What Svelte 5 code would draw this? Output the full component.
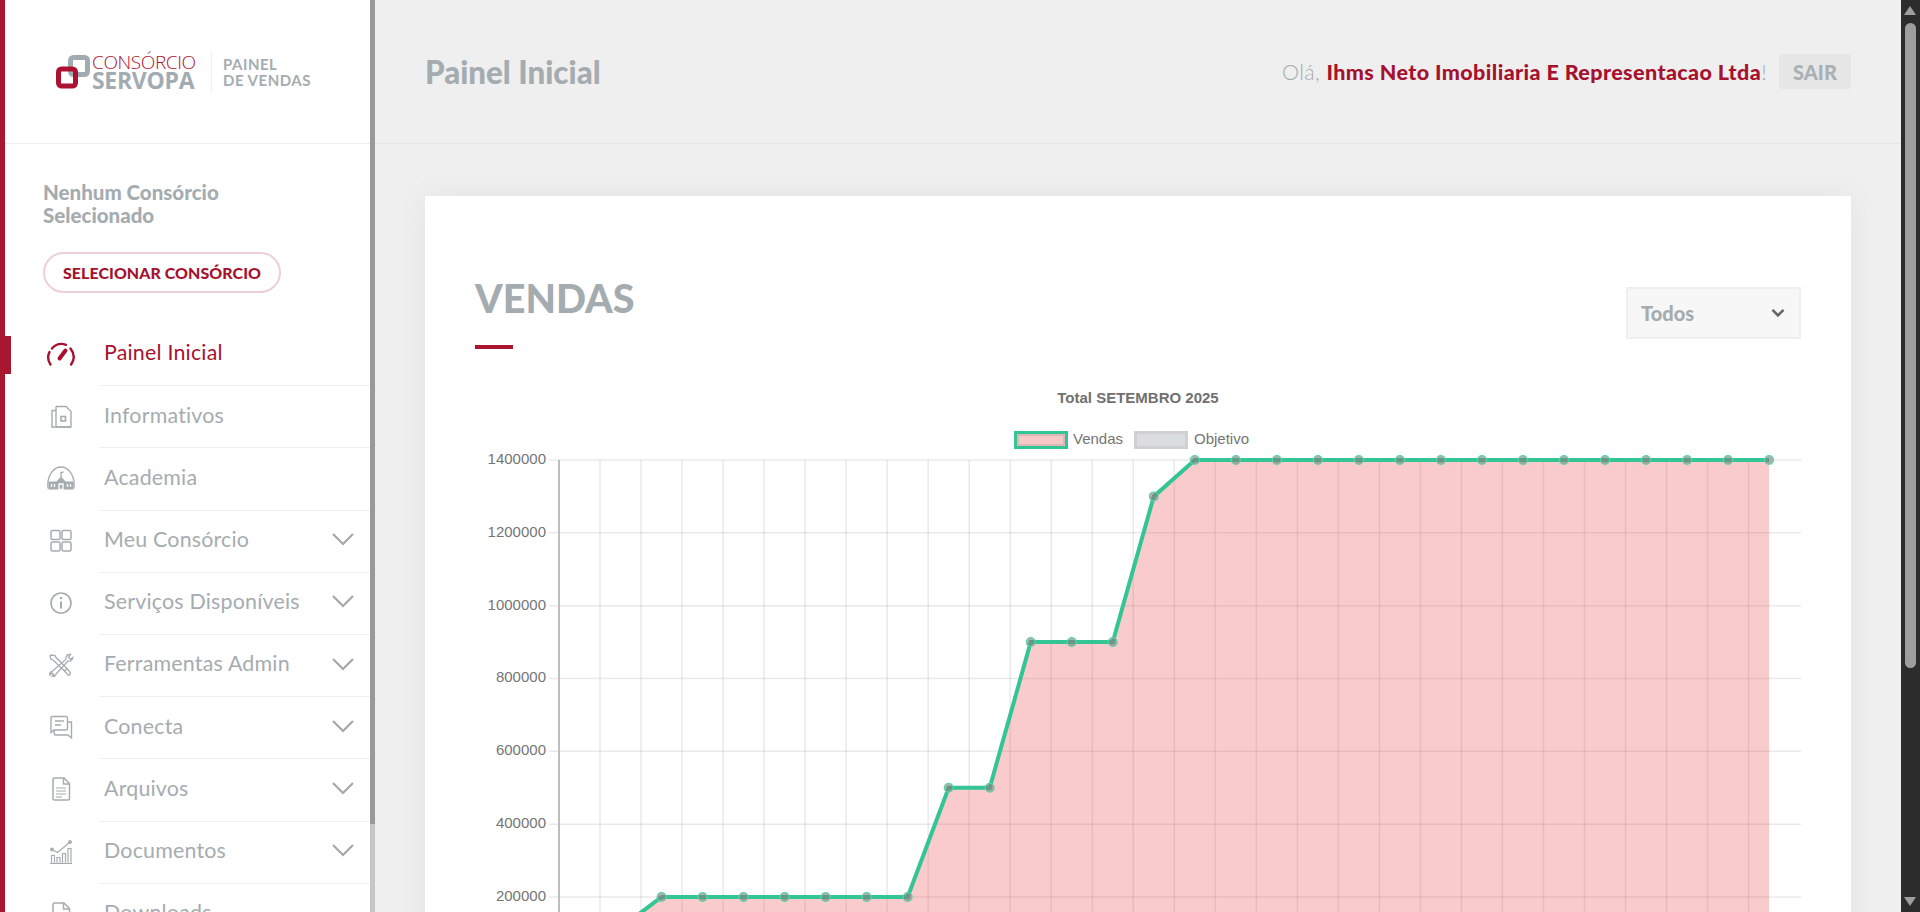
<script>
  const menu = [
    { label: 'Painel Inicial', icon: 'gauge', active: true },
    { label: 'Informativos', icon: 'note' },
    { label: 'Academia', icon: 'school' },
    { label: 'Meu Consórcio', icon: 'grid', sub: true },
    { label: 'Serviços Disponíveis', icon: 'info', sub: true },
    { label: 'Ferramentas Admin', icon: 'tools', sub: true },
    { label: 'Conecta', icon: 'chat', sub: true },
    { label: 'Arquivos', icon: 'doc', sub: true },
    { label: 'Documentos', icon: 'bars', sub: true },
    { label: 'Downloads', icon: 'doc' }
  ];

  const x0 = 559, step = 41.02;
  const yOf = (v) => 969.8 - (v / 200000) * 72.83;
  const ticks = [1400000, 1200000, 1000000, 800000, 600000, 400000, 200000];
  const values = [0, 115000, 200000, 200000, 200000, 200000, 200000, 200000, 200000, 500000, 500000, 900000, 900000, 900000, 1300000,
    ...Array(15).fill(1400000)];
  const pts = values.map((v, i) => ({ x: x0 + (i + 0.5) * step, y: yOf(v) }));
  const line = pts.map((p) => `${p.x},${p.y}`).join(' ');
  const area = `${pts[0].x},969.8 ${line} ${pts[pts.length - 1].x},969.8`;
  const verticals = Array.from({ length: 29 }, (_, i) => x0 + (i + 1) * step);
</script>

{#snippet icon(name)}
  {#if name === 'gauge'}
    <svg class="ic" viewBox="0 0 30 24" fill="none" stroke="currentColor" stroke-width="2.400" stroke-linecap="round">
      <path d="M4.500 22.500C1.800 18.500 1.500 14 3.500 10" />
      <path d="M6 6.500C9.500 2.500 15 1 20 2.800" />
      <path d="M24.500 6.500c3.700 4.700 4.300 10.800.6 16" />
      <path d="M19.500 8.500 13.500 16.500" stroke-width="4" />
    </svg>
  {:else if name === 'note'}
    <svg class="ic" viewBox="0 0 30 24" fill="none" stroke="currentColor" stroke-width="1.400">
      <path d="M10 2.500h10l5 5v15.500h-15" />
      <path d="M10 6.500H6v16.500h19" />
      <path d="M10 2.500v20" />
      <rect x="15" y="12.500" width="4.500" height="4.500" stroke-width="1.600" />
    </svg>
  {:else if name === 'school'}
    <svg class="ic" viewBox="0 0 30 24" fill="none" stroke="currentColor" stroke-width="1.300">
      <path d="M2 22.500C.6 9 8 1 15 1s14.400 8 13 21.500" />
      <path d="M2.500 23.500v-8h8l4.500-5 4.500 5h8v8z" fill="currentColor" stroke="none" />
      <path d="M15 11V6.500l2.500-.5" />
      <path d="M5.500 18v3M8.500 18v3M21.500 18v3M24.500 18v3M13 18h4v5.500h-4z" stroke="#fff" />
    </svg>
  {:else if name === 'grid'}
    <svg class="ic" viewBox="0 0 30 24" fill="none" stroke="currentColor" stroke-width="1.500">
      <rect x="5" y="1.500" width="9" height="9" rx="1.500" />
      <rect x="16" y="1.500" width="9" height="9" rx="1.500" />
      <rect x="5" y="13" width="9" height="9" rx="1.500" />
      <rect x="16" y="13" width="9" height="9" rx="1.500" />
    </svg>
  {:else if name === 'info'}
    <svg class="ic" viewBox="0 0 30 24" fill="none" stroke="currentColor" stroke-width="1.600">
      <circle cx="15" cy="12" r="10" />
      <path d="M15 10.500V17.500" stroke-width="2" />
      <circle cx="15" cy="7" r="1.200" fill="currentColor" stroke="none" />
    </svg>
  {:else if name === 'tools'}
    <svg class="ic" viewBox="0 0 30 24" fill="none" stroke="currentColor" stroke-width="1.300">
      <path d="M5 2 4 3l1 3 2 1 11.500 11 2.500-2.500L10 4.500 9 2.500z" />
      <path d="m18.500 18 3.500 4c1 .9 3.200-1.300 2.300-2.300L21 15.500" />
      <path d="M24.500 1.500c-2.500-.5-4.500 1-4.500 3.500l-.2 1.500L6 18.500c-2 .5-2.500 2-2 3.500l2-1.800 1.800 1.500-1.500 1.800c1.800.3 3.400-.5 3.700-2.500L22 8c2.500.5 4.500-.8 4.800-3.500l-2.300 1.700-2-1.700z" />
    </svg>
  {:else if name === 'chat'}
    <svg class="ic" viewBox="0 0 30 24" fill="none" stroke="currentColor" stroke-width="1.400">
      <path d="M6 1.500h14c1 0 1.500.6 1.500 1.500v10.500c0 1-.6 1.500-1.500 1.500H8l-3 2.500V3c0-1 .2-1.500 1-1.500z" />
      <path d="M21.500 7H25.500v16l-3.500-3H9.500c-.8 0-1.300-.5-1.300-1.500V15" />
      <path d="M9 6h9M9 10h6" />
    </svg>
  {:else if name === 'doc'}
    <svg class="ic" viewBox="0 0 30 24" fill="none" stroke="currentColor" stroke-width="1.500">
      <path d="M8.500 1h9.500l5.500 5.500V21.500c0 1-.5 1.500-1.500 1.500H8.500c-1 0-1.500-.5-1.500-1.500V2.500C7 1.500 7.500 1 8.500 1z" />
      <path d="M17.500 1v6h6" />
      <path d="M10 11h10M10 14h10M10 17h10M10 20h6" stroke-width="1.100" />
    </svg>
  {:else if name === 'bars'}
    <svg class="ic" viewBox="0 0 30 24" fill="none" stroke="currentColor" stroke-width="1.200">
      <path d="M4 23.500h22" stroke-width="1.400" />
      <path d="M5.500 22.500v-7h3v7M11 22.500v-5h3v5M16.500 22.500v-9h3v9M22 22.500v-14h3v14" />
      <path d="M6 9.500l5.500 3 6-5L24 2" />
      <circle cx="24" cy="2" r="1.300" fill="currentColor" />
      <circle cx="6" cy="9.500" r="1.300" fill="currentColor" />
    </svg>
  {/if}
{/snippet}

<div class="app">
  <aside class="sidebar">
    <div class="brand">
      <svg class="mark" viewBox="0 0 34 34" fill="none" stroke-width="5">
        <rect x="14.500" y="2.500" width="17" height="17" rx="3" stroke="#a2abb2" />
        <rect x="2.500" y="14" width="17" height="17" rx="3" stroke="#ab1231" />
      </svg>
      <div class="wordmark">
        <span class="w1">CONSÓRCIO</span>
        <span class="w2">SERVOPA</span>
      </div>
      <div class="tag">
        <span>PAINEL</span>
        <span>DE VENDAS</span>
      </div>
    </div>

    <div class="selection">
      <p>Nenhum Consórcio<br />Selecionado</p>
      <button class="pick">SELECIONAR CONSÓRCIO</button>
    </div>

    <nav>
      {#each menu as m}
        <div class="row" class:active={m.active}>
          <span class="glyph">{@render icon(m.icon)}</span>
          <span class="text">
            <span class="label">{m.label}</span>
            {#if m.sub}
              <svg class="chev" viewBox="0 0 24 14" fill="none" stroke="currentColor" stroke-width="2.200"><path d="M2 2l10 10L22 2" /></svg>
            {/if}
          </span>
        </div>
      {/each}
    </nav>

    <div class="side-track"><div class="side-thumb"></div></div>
  </aside>

  <main class="main">
    <header class="top">
      <h1>Painel Inicial</h1>
      <div class="user">
        <span class="hello">Olá, <b>Ihms Neto Imobiliaria E Representacao Ltda</b>!</span>
        <button class="exit">SAIR</button>
      </div>
    </header>

    <section class="content">
      <div class="card">
        <div class="card-head">
          <div>
            <h2>VENDAS</h2>
            <div class="rule"></div>
          </div>
          <div class="select">
            <span>Todos</span>
            <svg viewBox="0 0 14 10" fill="none" stroke="#666" stroke-width="2.600"><path d="M1.500 1.800 7 7.500l5.500-5.700" /></svg>
          </div>
        </div>

        <svg class="chart" viewBox="475 380 1326 600">
          <text class="title" x="1138" y="403" text-anchor="middle">Total SETEMBRO 2025</text>

          <rect x="1015.500" y="432.500" width="51" height="15" fill="#f9c8c9" stroke="#33c594" stroke-width="3" />
          <rect x="1018" y="435" width="46" height="10" fill="none" stroke="#8a9a8f" stroke-width="1" opacity=".6" />
          <text class="tick" x="1073" y="444">Vendas</text>
          <rect x="1135.500" y="432.500" width="51" height="15" fill="#dcdde0" stroke="#d0d0d0" stroke-width="3" />
          <text class="tick" x="1194" y="444">Objetivo</text>

          {#each ticks as t}
            <line class="grid" x1="549" x2="1801" y1={yOf(t)} y2={yOf(t)} />
            <text class="tick" x="546" y={yOf(t) + 4} text-anchor="end">{t}</text>
          {/each}
          {#each verticals as x}
            <line class="grid" x1={x} x2={x} y1="460" y2="980" />
          {/each}
          <line x1="559" x2="559" y1="460" y2="980" stroke="#bdbdbd" stroke-width="2" />

          <polygon points={area} fill="rgba(235,70,72,.28)" />
          <polyline points={line} fill="none" stroke="#33c594" stroke-width="4" />
          {#each pts.slice(1) as p}
            <circle cx={p.x} cy={p.y} r="4.400" fill="rgba(128,128,128,.62)" stroke="#5cd3aa" stroke-width="1.200" />
          {/each}
        </svg>
      </div>
    </section>
  </main>

  <div class="page-bar">
    <span class="arrow up"></span>
    <div class="page-thumb"></div>
    <span class="arrow down"></span>
  </div>
</div>

<style>
  :global(body) {
    margin: 0;
    overflow: hidden;
    background: #efefef;
  }
  .app {
    display: flex;
    height: 912px;
    overflow: hidden;
    font-family: Lato, "Open Sans", sans-serif;
    color: #a5acb0;
  }

  .sidebar {
    position: relative;
    flex: 0 0 370px;
    box-sizing: border-box;
    border-left: 5px solid #a8162f;
    background: #fff;
    margin-right: 5px;
  }
  .side-track {
    position: absolute;
    top: 0;
    bottom: 0;
    right: -5px;
    width: 5px;
    background: #c6c6c6;
  }
  .side-thumb {
    height: 824px;
    background: #999;
  }

  .brand {
    display: flex;
    align-items: center;
    height: 143px;
    border-bottom: 1px solid #eee;
    padding-left: 51px;
  }
  .mark {
    width: 34px;
    height: 34px;
    margin-right: 2px;
  }
  .wordmark {
    display: flex;
    flex-direction: column;
    width: 119px;
    font-family: "Open Sans", sans-serif;
  }
  .w1 {
    color: #ab1231;
    font-size: 19px;
    line-height: 17px;
    font-weight: 300;
    letter-spacing: -0.400px;
  }
  .w2 {
    color: #a2abb2;
    font-size: 23px;
    line-height: 18px;
    font-weight: 700;
    letter-spacing: -0.300px;
  }
  .tag {
    display: flex;
    flex-direction: column;
    border-left: 1px solid #eee;
    padding: 4px 0 4px 11px;
    font-size: 15px;
    line-height: 16px;
    font-weight: 700;
    letter-spacing: 0.500px;
  }

  .selection {
    padding: 37px 0 0 38px;
  }
  .selection p {
    margin: 0;
    font-size: 20.500px;
    line-height: 23px;
    font-weight: 900;
  }
  .pick {
    display: block;
    box-sizing: border-box;
    width: 238px;
    height: 41px;
    margin-top: 25px;
    padding: 0;
    background: #fff;
    border: 2px solid #edd0d5;
    border-radius: 21px;
    color: #a6122e;
    font: 900 15.900px Lato, sans-serif;
    letter-spacing: 0.100px;
  }

  nav {
    padding-top: 31px;
  }
  .row {
    position: relative;
    display: flex;
    height: 62.200px;
    font-size: 21.400px;
    letter-spacing: 0.200px;
  }
  .row.active {
    color: #a6122e;
  }
  .row.active::before {
    content: '';
    position: absolute;
    left: -5px;
    top: 12px;
    width: 11px;
    height: 38px;
    background: #a8162f;
  }
  .glyph {
    flex: 0 0 94px;
    display: flex;
    align-items: center;
    padding: 0 0 2px 41px;
    box-sizing: border-box;
  }
  .ic {
    width: 30px;
    height: 24px;
  }
  .text {
    flex: 1;
    display: flex;
    align-items: center;
    justify-content: space-between;
    padding: 0 15px 4px 5px;
    border-bottom: 1px solid #eee;
    box-sizing: border-box;
    line-height: 1;
  }
  .label {
    padding-top: 1px;
  }
  .chev {
    width: 24px;
    height: 14px;
    color: #a7a7a7;
  }

  .main {
    flex: 1;
    min-width: 0;
  }
  .top {
    display: flex;
    align-items: center;
    justify-content: space-between;
    height: 143px;
    padding: 0 50px;
    border-bottom: 1px solid #e6e6e6;
  }
  .top h1 {
    margin: 0;
    font-size: 31.300px;
    font-weight: 900;
    color: #a5acb0;
  }
  .user {
    display: flex;
    align-items: center;
    gap: 12px;
  }
  .hello {
    font-size: 21.500px;
    font-weight: 300;
    letter-spacing: 0.400px;
    color: #a5acb0;
  }
  .hello b {
    color: #a6122e;
    font-weight: 900;
  }
  .exit {
    width: 72px;
    height: 35px;
    padding: 0;
    border: 0;
    border-radius: 4px;
    background: #e6e6e6;
    color: #a9b0b3;
    font: 900 20px Lato, sans-serif;
  }

  .content {
    padding: 52px 50px 0;
  }
  .card {
    background: #fff;
    padding: 79px 50px 0;
    box-shadow: 0 0 30px rgba(0, 0, 0, 0.05);
  }
  .card-head {
    display: flex;
    align-items: flex-start;
    justify-content: space-between;
    height: 105px;
  }
  h2 {
    margin: 0;
    font-size: 39.500px;
    line-height: 46px;
    font-weight: 900;
    color: #a5acb0;
  }
  .rule {
    width: 38px;
    height: 4px;
    margin-top: 24px;
    background: #a8162f;
  }
  .select {
    display: flex;
    align-items: center;
    justify-content: space-between;
    box-sizing: border-box;
    width: 175px;
    height: 52px;
    margin-top: 12px;
    padding: 0 14px 0 13px;
    background: #f7f7f7;
    border: 2px solid #efefef;
    font-size: 20px;
    font-weight: 900;
  }
  .select svg {
    width: 14px;
    height: 10px;
  }
  .chart {
    display: block;
    width: 1326px;
    height: 600px;
  }
  .title {
    font: 700 15px "Liberation Sans", Arial, sans-serif;
    fill: #707070;
  }
  .tick {
    font: 15px "Liberation Sans", Arial, sans-serif;
    fill: #757575;
  }
  .grid {
    stroke: rgba(0, 0, 0, 0.085);
    stroke-width: 1.500;
  }

  .page-bar {
    position: relative;
    flex: 0 0 19px;
    background: #2c2c2c;
  }
  .page-thumb {
    position: absolute;
    top: 23px;
    left: 4px;
    width: 11px;
    height: 645px;
    border-radius: 6px;
    background: #9e9e9e;
  }
  .arrow {
    position: absolute;
    left: 3px;
    width: 0;
    height: 0;
    border-left: 6.500px solid transparent;
    border-right: 6.500px solid transparent;
  }
  .arrow.up {
    top: 6px;
    border-bottom: 9px solid #9e9e9e;
  }
  .arrow.down {
    bottom: 6px;
    border-top: 9px solid #9e9e9e;
  }
</style>
